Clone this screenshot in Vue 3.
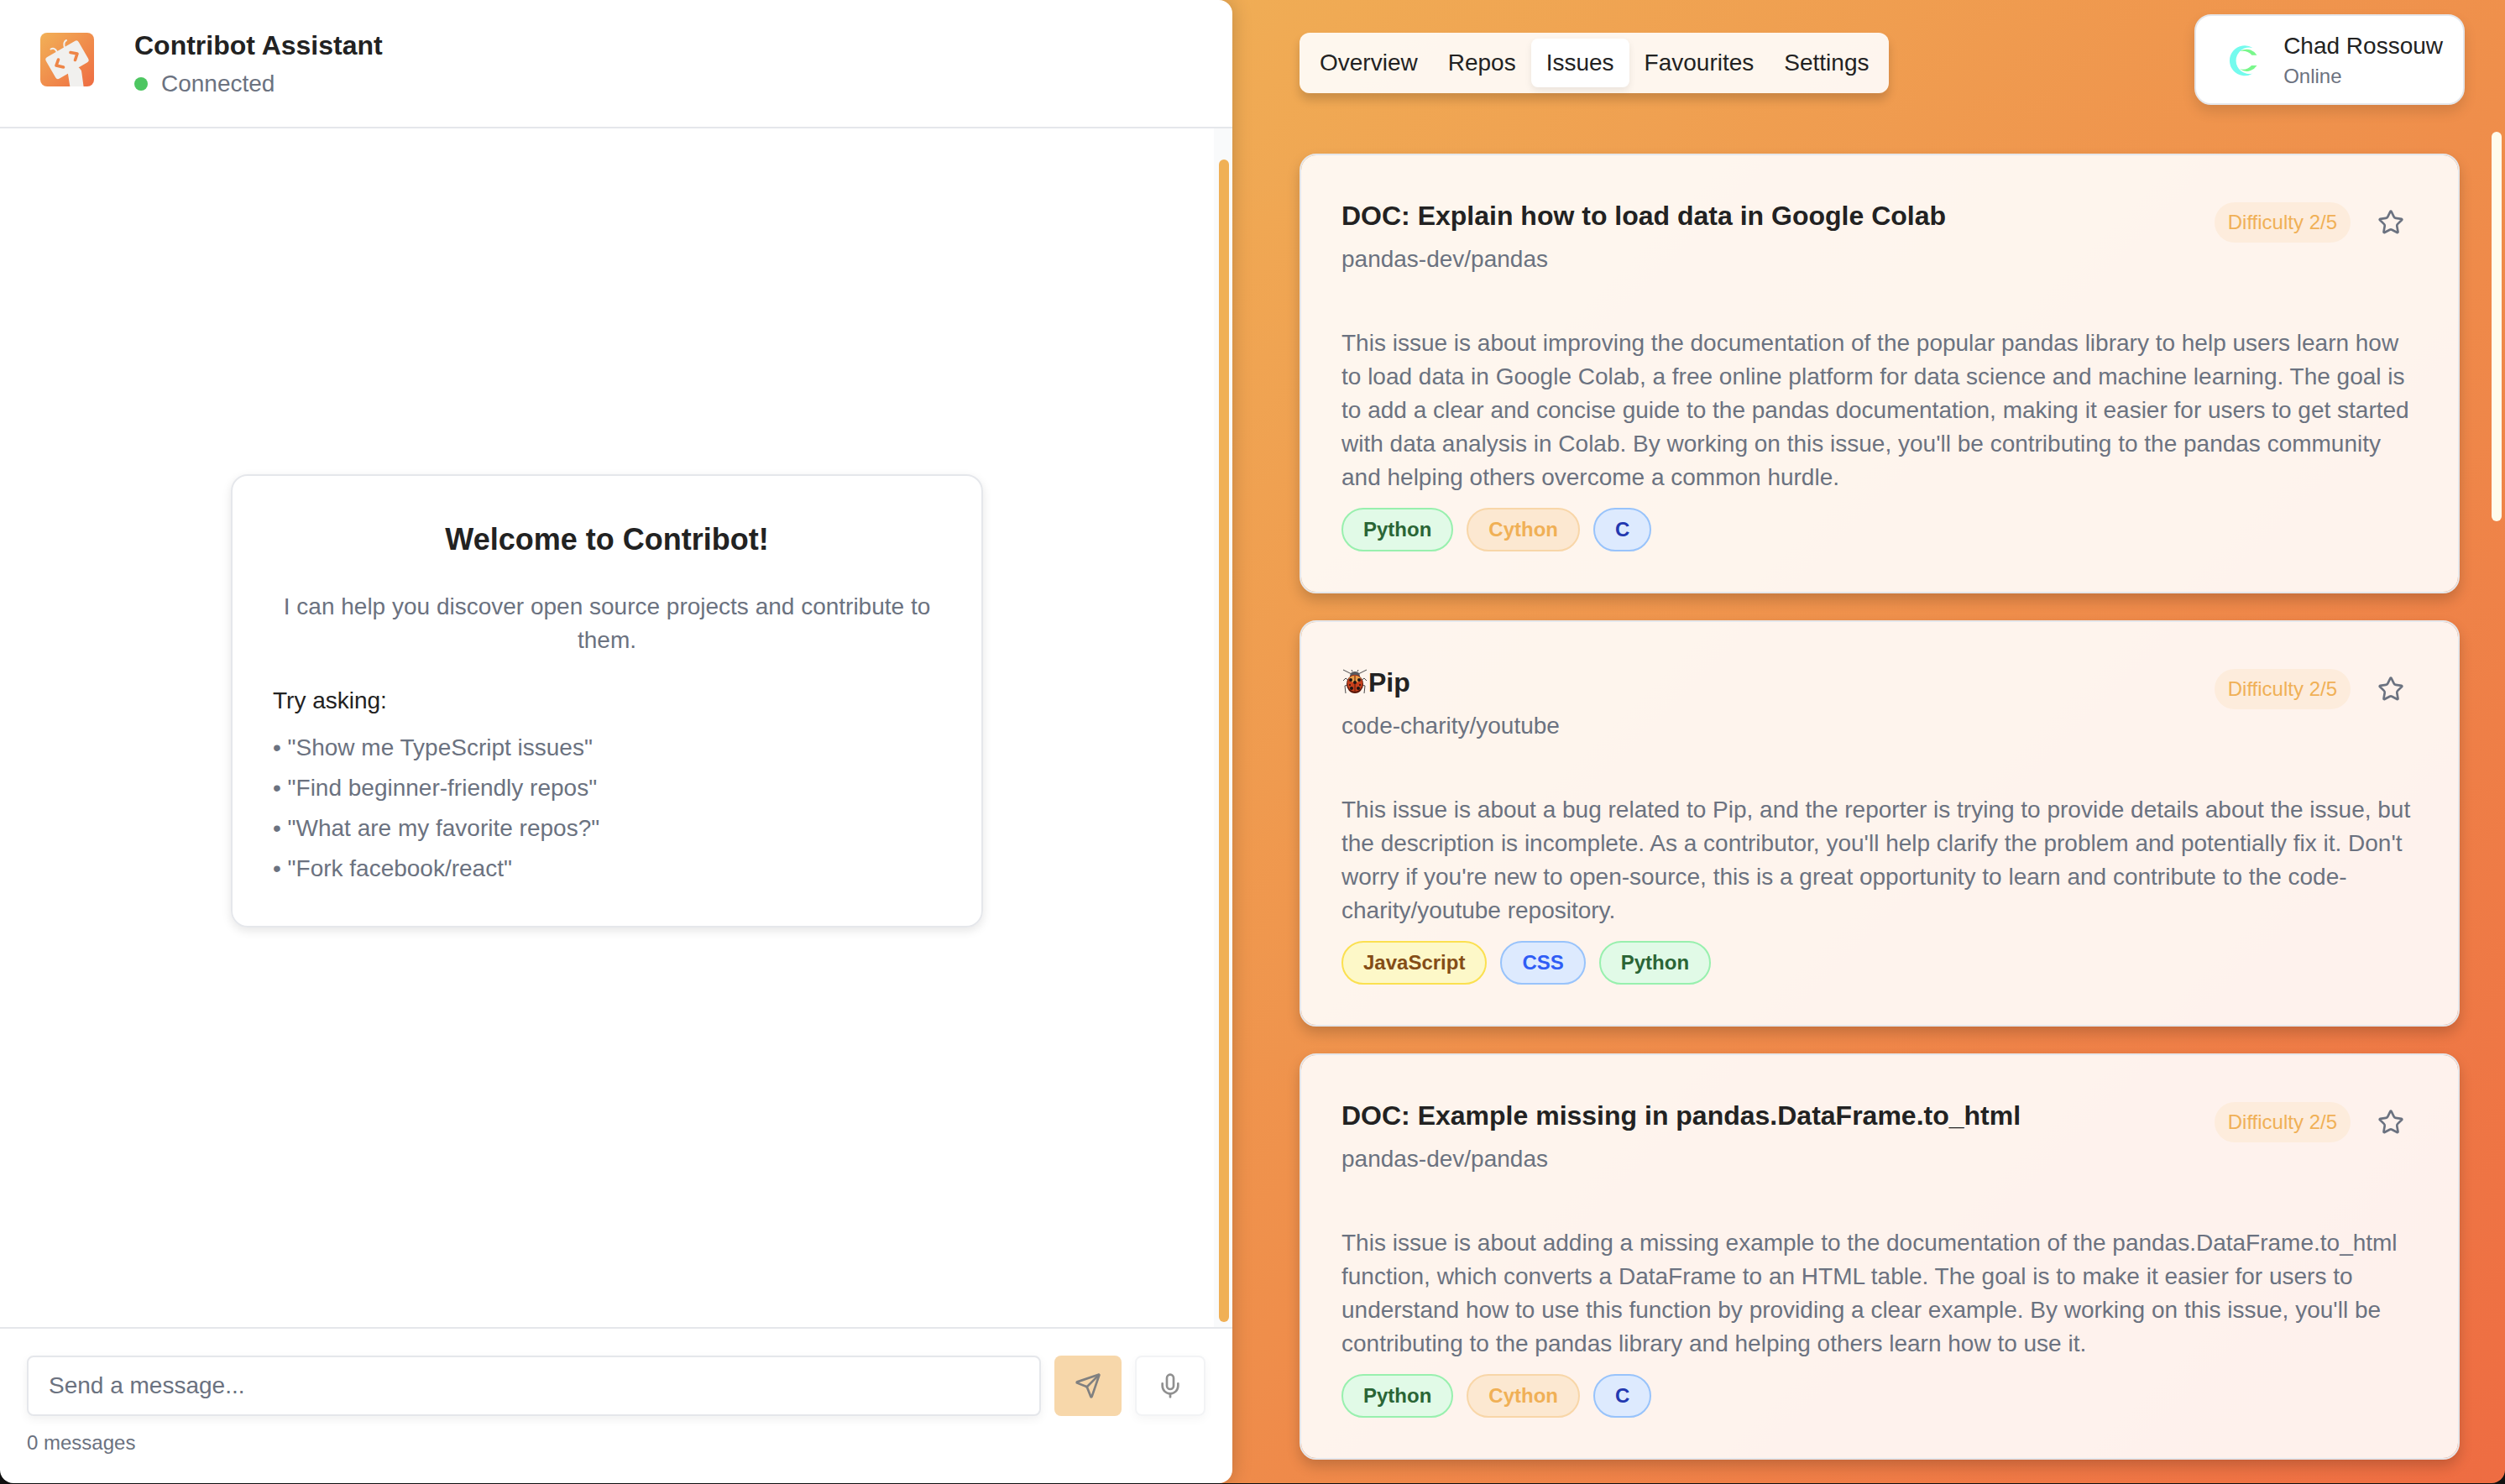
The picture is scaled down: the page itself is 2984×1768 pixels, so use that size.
<script setup>
import { ref } from 'vue'

const tabs = ['Overview', 'Repos', 'Issues', 'Favourites', 'Settings']
const activeTab = ref('Issues')
const message = ref('')

const prompts = [
  'Show me TypeScript issues',
  'Find beginner-friendly repos',
  'What are my favorite repos?',
  'Fork facebook/react',
]

const issues = [
  {
    title: 'DOC: Explain how to load data in Google Colab',
    repo: 'pandas-dev/pandas',
    difficulty: 2,
    text: "This issue is about improving the documentation of the popular pandas library to help users learn how to load data in Google Colab, a free online platform for data science and machine learning. The goal is to add a clear and concise guide to the pandas documentation, making it easier for users to get started with data analysis in Colab. By working on this issue, you'll be contributing to the pandas community and helping others overcome a common hurdle.",
    tags: [
      { name: 'Python', tone: 'green' },
      { name: 'Cython', tone: 'amber' },
      { name: 'C', tone: 'navy' },
    ],
  },
  {
    title: 'Pip',
    bug: true,
    repo: 'code-charity/youtube',
    difficulty: 2,
    text: "This issue is about a bug related to Pip, and the reporter is trying to provide details about the issue, but the description is incomplete. As a contributor, you'll help clarify the problem and potentially fix it. Don't worry if you're new to open-source, this is a great opportunity to learn and contribute to the code-charity/youtube repository.",
    tags: [
      { name: 'JavaScript', tone: 'yellow' },
      { name: 'CSS', tone: 'blue' },
      { name: 'Python', tone: 'green' },
    ],
  },
  {
    title: 'DOC: Example missing in pandas.DataFrame.to_html',
    repo: 'pandas-dev/pandas',
    difficulty: 2,
    text: "This issue is about adding a missing example to the documentation of the pandas.DataFrame.to_html function, which converts a DataFrame to an HTML table. The goal is to make it easier for users to understand how to use this function by providing a clear example. By working on this issue, you'll be contributing to the pandas library and helping others learn how to use it.",
    tags: [
      { name: 'Python', tone: 'green' },
      { name: 'Cython', tone: 'amber' },
      { name: 'C', tone: 'navy' },
    ],
  },
]
</script>

<template>
  <div class="app">
    <section class="chat">
      <header class="chat-header">
        <svg class="logo" viewBox="0 0 64 64" aria-hidden="true">
          <defs>
            <linearGradient id="logo-fill" x1="0" y1="0" x2="1" y2="1">
              <stop offset="0" stop-color="#f2b157" />
              <stop offset="1" stop-color="#ee6c42" />
            </linearGradient>
            <clipPath id="logo-clip"><rect width="64" height="64" rx="8" /></clipPath>
          </defs>
          <rect width="64" height="64" rx="8" fill="url(#logo-fill)" />
          <g clip-path="url(#logo-clip)">
            <path d="M32.500 46 L43 39 L46.500 42 Q49 44 49.400 48 L51.700 65 H35.500 Z" fill="#f1f0ee" />
            <rect x="9.500" y="17.500" width="45" height="29.500" rx="3.500" transform="rotate(-30 32 32.300)" fill="#f1f0ee" />
            <path d="M12.500 19.500 Q17 17 20 23 M31 9 Q27 11 29 18" fill="none" stroke="#f1f0ee" stroke-width="2" stroke-linecap="round" />
            <path d="M21.500 32 L19 39 L27.500 41 M36 23.500 L44 25 L41.500 32.500" fill="none" stroke="#ee8547" stroke-width="3.600" stroke-linecap="round" stroke-linejoin="round" />
          </g>
        </svg>
        <div>
          <h1 class="chat-title">Contribot Assistant</h1>
          <p class="status"><span class="dot"></span>Connected</p>
        </div>
      </header>

      <div class="chat-body">
        <div class="chat-scroll">
          <div class="welcome">
            <h2>Welcome to Contribot!</h2>
            <p class="intro">I can help you discover open source projects and contribute to them.</p>
            <p class="try">Try asking:</p>
            <ul>
              <li v-for="prompt in prompts" :key="prompt">• "{{ prompt }}"</li>
            </ul>
          </div>
        </div>
        <div class="track chat-track"><div class="thumb"></div></div>
      </div>

      <footer class="composer">
        <form class="composer-row" @submit.prevent>
          <input v-model="message" type="text" placeholder="Send a message..." aria-label="Message" />
          <button type="submit" class="send" aria-label="Send">
            <svg class="icon" viewBox="0 0 24 24">
              <path d="M14.536 21.686a.5.5 0 0 0 .937-.024l6.500-19a.496.496 0 0 0-.635-.635l-19 6.500a.5.5 0 0 0-.024.937l7.930 3.180a2 2 0 0 1 1.112 1.110z" />
              <path d="m21.854 2.147-10.940 10.939" />
            </svg>
          </button>
          <button type="button" class="mic" aria-label="Record">
            <svg class="icon" viewBox="0 0 24 24">
              <path d="M12 19v3" />
              <path d="M19 10v2a7 7 0 0 1-14 0v-2" />
              <rect x="9" y="2" width="6" height="13" rx="3" />
            </svg>
          </button>
        </form>
        <p class="count">0 messages</p>
      </footer>
    </section>

    <main class="board">
      <div class="topbar">
        <nav class="tabs">
          <button
            v-for="tab in tabs"
            :key="tab"
            type="button"
            :class="{ active: tab === activeTab }"
            @click="activeTab = tab"
          >{{ tab }}</button>
        </nav>
        <div class="user">
          <svg class="avatar" viewBox="0 0 64 64" aria-hidden="true">
            <path d="M43.500 18 A18 18 0 1 0 43.500 48.500 A15.800 15.800 0 1 1 43.500 18 Z" fill="#74fbee" />
            <path d="M28 22 Q35 18.500 41 20.500 Q46 22.500 48.500 26.700 H42.500 Q37 20.500 28 22 Z" fill="#79f78b" />
            <path d="M28 43.300 Q35 47.500 41 45 Q46 43 48.500 39 H42 Q37 45 28 43.300 Z" fill="#79f78b" />
          </svg>
          <div>
            <p class="user-name">Chad Rossouw</p>
            <p class="user-state">Online</p>
          </div>
        </div>
      </div>

      <div class="board-body">
        <div class="issues">
          <article v-for="issue in issues" :key="issue.title" class="issue">
            <div class="issue-head">
              <div>
                <h3>
                  <svg v-if="issue.bug" class="beetle" viewBox="0 0 32 32" role="img" aria-label="Beetle">
                    <g fill="none" stroke="#4a4a4c" stroke-width="1">
                      <path d="M12 6 L8 4 L2 1 M20 6 L24 4 L30 1 M9 14 L5 11 L2 14 M23 14 L27 11 L30 14 M8 19 L4 20 L5 29 M24 19 L28 20 L27 29 M13 3 L12 1 M19 3 L20 1" />
                    </g>
                    <path d="M10 9 Q10 3 16 3 Q22 3 22 9 Z" fill="#56595e" />
                    <ellipse cx="16" cy="18" rx="10" ry="11" fill="#5a1609" />
                    <ellipse cx="16" cy="17" rx="9" ry="10" fill="#c8401c" />
                    <ellipse cx="16" cy="12" rx="7" ry="4" fill="#eaa04a" />
                    <path d="M16 8 V28" stroke="#5a1609" />
                    <g fill="#1d1513">
                      <circle cx="11" cy="13" r="2" /><circle cx="21" cy="13" r="2" />
                      <circle cx="16" cy="16" r="2" />
                      <circle cx="10" cy="19" r="1" /><circle cx="22" cy="19" r="1" />
                      <circle cx="12" cy="23" r="2" /><circle cx="20" cy="23" r="2" />
                    </g>
                  </svg>{{ issue.title }}
                </h3>
                <p class="repo">{{ issue.repo }}</p>
              </div>
              <div class="issue-actions">
                <span class="difficulty">Difficulty {{ issue.difficulty }}/5</span>
                <button type="button" class="star" aria-label="Favourite">
                  <svg class="icon" viewBox="0 0 24 24">
                    <path d="M11.525 2.295a.53.53 0 0 1 .95 0l2.310 4.679a2.123 2.123 0 0 0 1.595 1.160l5.166.756a.53.53 0 0 1 .294.904l-3.736 3.638a2.123 2.123 0 0 0-.611 1.878l.882 5.140a.53.53 0 0 1-.771.56l-4.618-2.428a2.122 2.122 0 0 0-1.973 0L6.396 21.010a.53.53 0 0 1-.77-.56l.881-5.139a2.122 2.122 0 0 0-.611-1.879L2.160 9.795a.53.53 0 0 1 .294-.906l5.165-.755a2.122 2.122 0 0 0 1.597-1.160z" />
                  </svg>
                </button>
              </div>
            </div>
            <p class="issue-text">{{ issue.text }}</p>
            <div class="tags">
              <span v-for="tag in issue.tags" :key="tag.name" class="tag" :class="tag.tone">{{ tag.name }}</span>
            </div>
          </article>
        </div>
        <div class="track board-track"><div class="thumb"></div></div>
      </div>
    </main>
  </div>
</template>

<style>
body {
  margin: 0;
  background: #111;
}
</style>

<style scoped>
.app {
  display: grid;
  grid-template-columns: 1468fr 1516fr;
  min-height: 100vh;
  box-sizing: border-box;
  border-bottom: 1px solid #111;
  font-family: "Liberation Sans", Arial, Helvetica, sans-serif;
  font-size: 28px;
  line-height: 40px;
  color: #222;
}
.app * {
  box-sizing: border-box;
}
h1, h2, h3, p, ul {
  margin: 0;
  padding: 0;
}
button, input {
  font: inherit;
  color: inherit;
}
button {
  display: flex;
  align-items: center;
  justify-content: center;
  border: 0;
  background: none;
}
.icon {
  display: block;
  width: 32px;
  height: 32px;
  fill: none;
  stroke: currentColor;
  stroke-width: 2;
  stroke-linecap: round;
  stroke-linejoin: round;
}
.track {
  flex: none;
  width: 22px;
}
.thumb {
  width: 12px;
  margin: 0 4px 0 6px;
  border-radius: 6px;
}

.chat {
  position: relative;
  z-index: 1;
  display: flex;
  flex-direction: column;
  background: #fff;
  border-radius: 0 16px 16px 16px;
  box-shadow: 0 0 24px rgba(0, 0, 0, 0.2);
}
.chat-header {
  display: flex;
  align-items: flex-start;
  gap: 48px;
  padding: 30px 48px 31px;
  border-bottom: 2px solid #e5e7eb;
}
.logo {
  width: 64px;
  height: 64px;
  margin-top: 9px;
}
.chat-title {
  margin-bottom: 2px;
  font-size: 32px;
  line-height: 48px;
}
.status {
  display: flex;
  align-items: center;
  gap: 16px;
  color: #6b7280;
}
.dot {
  width: 16px;
  height: 16px;
  border-radius: 50%;
  background: #4dc661;
}
.chat-body {
  display: flex;
  flex: 1;
}
.chat-scroll {
  display: flex;
  flex: 1;
  align-items: center;
  justify-content: center;
  padding: 32px 32px 96px;
}
.chat-track {
  display: flex;
  padding: 37px 0 6px;
  background: #f9fafb;
}
.chat-track .thumb {
  background: #f0b056;
}
.welcome {
  width: 896px;
  padding: 48px;
  border: 2px solid #e5e7eb;
  border-radius: 20px;
  box-shadow: 0 4px 12px rgba(0, 0, 0, 0.1);
}
.welcome h2 {
  font-size: 36px;
  line-height: 56px;
  text-align: center;
}
.intro {
  margin: 32px 0;
  color: #6b7280;
  text-align: center;
}
.welcome ul {
  display: flex;
  flex-direction: column;
  gap: 8px;
  margin-top: 16px;
  color: #6b7280;
  list-style: none;
}
.composer {
  padding: 32px;
  border-top: 2px solid #e5e7eb;
}
.composer-row {
  display: flex;
  gap: 16px;
  height: 72px;
}
.composer input {
  flex: 1;
  min-width: 0;
  padding: 0 24px;
  border: 2px solid #e5e7eb;
  border-radius: 8px;
  background: #fff;
  box-shadow: 0 4px 12px rgba(0, 0, 0, 0.06);
}
.composer input::placeholder {
  color: #6b7280;
  opacity: 1;
}
.send {
  width: 80px;
  border-radius: 8px;
  background: #f7d7aa;
  color: #808080;
}
.mic {
  width: 84px;
  border: 2px solid #f2f3f5;
  border-radius: 8px;
  box-shadow: 0 4px 12px rgba(0, 0, 0, 0.04);
  color: #909090;
}
.count {
  margin-top: 16px;
  font-size: 24px;
  line-height: 32px;
  color: #6b7280;
}

.board {
  display: flex;
  flex-direction: column;
  margin-left: -16px;
  padding-left: 96px;
  border-radius: 0 0 16px 0;
  background: linear-gradient(135deg, #f0ad55, #ef8e4b 50%, #ee6c42);
}
.topbar {
  display: flex;
  align-items: flex-start;
  justify-content: space-between;
  height: 151px;
  padding: 17px 48px 0 0;
}
.tabs {
  display: flex;
  height: 72px;
  margin-top: 22px;
  padding: 7px 6px;
  border-radius: 12px;
  background: rgba(255, 255, 255, 0.9);
  box-shadow: 0 8px 12px rgba(0, 0, 0, 0.16);
}
.tabs button {
  padding: 0 18px;
  border-radius: 8px;
}
.tabs .active {
  background: #fff;
  box-shadow: 0 4px 8px rgba(0, 0, 0, 0.08);
}
.user {
  display: flex;
  align-items: center;
  gap: 16px;
  height: 108px;
  padding: 0 24px;
  border: 2px solid #e5e7eb;
  border-radius: 20px;
  background: #fff;
  box-shadow: 0 8px 16px rgba(0, 0, 0, 0.12);
}
.avatar {
  width: 64px;
  height: 64px;
}
.user-state {
  font-size: 24px;
  line-height: 32px;
  color: #6b7280;
}
.board-body {
  display: flex;
  flex: 1;
}
.issues {
  display: flex;
  flex: 1;
  flex-direction: column;
  gap: 32px;
  padding: 32px 32px 28px 0;
}
.board-track {
  padding-top: 6px;
}
.board-track .thumb {
  height: 464px;
  background: #fffcec;
}
.issue {
  padding: 48px;
  border: 2px solid #e5e7eb;
  border-radius: 20px;
  background: rgba(255, 255, 255, 0.9);
  background-clip: padding-box;
  box-shadow: 0 8px 16px rgba(0, 0, 0, 0.18);
}
.issue-head {
  display: flex;
  align-items: flex-start;
  justify-content: space-between;
}
.issue h3 {
  display: flex;
  align-items: center;
  font-size: 32px;
  line-height: 48px;
}
.beetle {
  width: 32px;
  height: 32px;
}
.repo {
  margin-top: 8px;
  color: #6b7280;
}
.issue-actions {
  display: flex;
  align-items: center;
  gap: 16px;
}
.difficulty {
  padding: 8px 16px;
  border-radius: 24px;
  background: #fdecdc;
  font-size: 24px;
  line-height: 32px;
  color: #f0b056;
}
.star {
  width: 64px;
  height: 64px;
  padding: 0;
  color: #6b7280;
}
.issue-text {
  margin: 60px 0 16px;
  color: #6b7280;
}
.tags {
  display: flex;
  gap: 16px;
}
.tag {
  padding: 8px 24px;
  border: 2px solid;
  border-radius: 26px;
  font-size: 24px;
  font-weight: 700;
  line-height: 32px;
}
.green {
  border-color: #98f0ae;
  background: #e1fae7;
  color: #2a6535;
}
.amber {
  border-color: #f8d6a8;
  background: #fce8d1;
  color: #f0b056;
}
.navy {
  border-color: #98c3fb;
  background: #ddeafe;
  color: #2338b0;
}
.blue {
  border-color: #98c3fb;
  background: #ddeafe;
  color: #2f5df5;
}
.yellow {
  border-color: #fbe050;
  background: #fdf8c8;
  color: #844d16;
}
</style>
